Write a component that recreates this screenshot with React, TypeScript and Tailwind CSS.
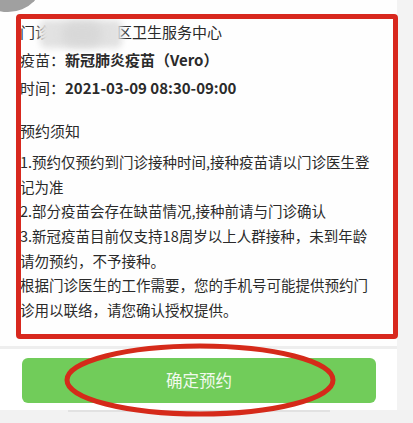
import React from "react";

const lines = [
  "1.预约仅预约到门诊接种时间,接种疫苗请以门诊医生登",
  "记为准",
  "2.部分疫苗会存在缺苗情况,接种前请与门诊确认",
  "3.新冠疫苗目前仅支持18周岁以上人群接种，未到年龄",
  "请勿预约，不予接种。",
  "根据门诊医生的工作需要，您的手机号可能提供预约门",
  "诊用以联络，请您确认授权提供。",
];

export default function App() {
  return (
    <div
      className="relative w-[413px] h-[423px] overflow-hidden bg-[#f2f2f2] text-[#2a2a2a]"
      style={{ fontFamily: '"Noto Sans CJK SC", "Noto Sans", sans-serif' }}
    >
      <div className="flex w-[413px]">
        <div className="w-[397px] bg-white flex flex-col">
          <div className="pl-[20px] pt-[18px] h-[346px] bg-[#fefefe]">
            <div className="h-[28px] leading-[28px] text-[15px] whitespace-nowrap flex">
              <span>门诊</span>
              <span className="inline-block w-[67px] shrink-0" />
              <span>区卫生服务中心</span>
            </div>
            <div className="h-[28px] leading-[28px] text-[15px] whitespace-nowrap">
              疫苗：<span className="font-semibold">新冠肺炎疫苗（Vero）</span>
            </div>
            <div className="h-[28px] leading-[28px] text-[15px] whitespace-nowrap">
              时间：<span className="font-bold">2021-03-09 08:30-09:00</span>
            </div>
            <div className="mt-[15px] h-[28px] leading-[28px] text-[15px] whitespace-nowrap">
              预约须知
            </div>
            <div className="mt-[5px]">
              {lines.map((l, i) => (
                <div
                  key={i}
                  className="h-[24.7px] leading-[24.7px] text-[14.5px] whitespace-nowrap"
                >
                  {l}
                </div>
              ))}
            </div>
          </div>
          <div className="h-[3px] bg-[#eeeeee]" />
          <div className="h-[61px] pl-[22px] pr-[21px] pt-[9px] bg-white">
            <div className="h-[45px] rounded-[6px] bg-[#71cc5a] flex items-center justify-center text-[16.5px] text-[#f2faee]">
              确定预约
            </div>
          </div>
        </div>
        <div className="flex-1 bg-[#f3f3f3]" />
      </div>
      <div className="h-[2px] ml-[68px] w-[262px] bg-[#e2e2e2]" />

      {/* grey avatar circle at top-left */}
      <div className="absolute left-[-29px] top-[-62px] w-[74px] h-[74px] rounded-full bg-[#a0a0a0]" />

      {/* redaction blur */}
      <div className="absolute left-[40px] top-[20px] w-[82px] h-[28px] bg-[#e2e2e2] blur-[3px] rounded-[6px]" />
      <div className="absolute left-[62px] top-[22px] w-[40px] h-[24px] bg-[#d8d8d8] blur-[4px] rounded-full" />

      {/* red annotation rectangle */}
      <div className="absolute left-[16px] top-[14px] w-[382px] h-[325px] border-[5px] border-[#d8281e] rounded-[4px]" />

      {/* red annotation ellipse */}
      <svg className="absolute left-0 top-0" width="413" height="423" viewBox="0 0 413 423">
        <ellipse cx="200" cy="380" rx="133" ry="34" fill="none" stroke="#d52a1a" strokeWidth="5" />
      </svg>
    </div>
  );
}
